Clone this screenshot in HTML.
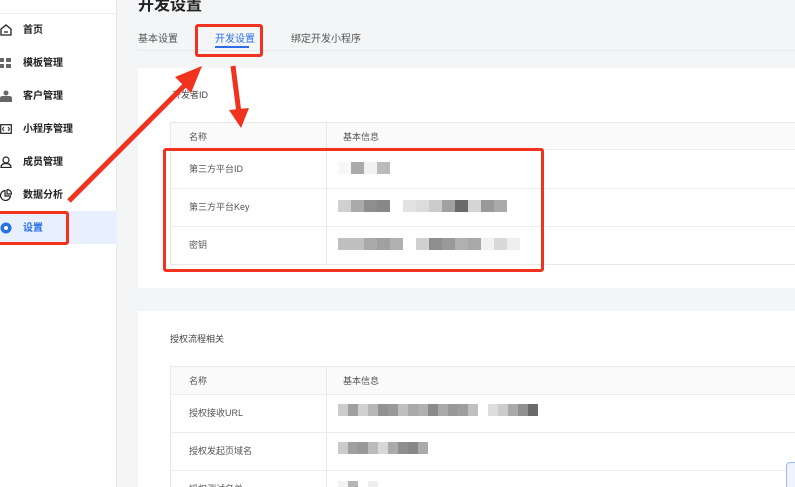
<!DOCTYPE html><html style="width:795px;height:487px;overflow:hidden"><head><meta charset="utf-8"><style>
*{margin:0;padding:0;box-sizing:border-box}
body{width:795px;height:487px;overflow:hidden;background:#f4f5f6;font-family:"Liberation Sans","Noto Sans CJK SC",sans-serif;position:relative;color:#333}
.abs{position:absolute}
.side{left:0;top:0;width:117px;height:487px;background:#fff;border-right:1px solid #e8e8e8}
.si{position:absolute;left:0;width:117px;height:33px;font-size:10px;font-weight:bold;color:#222;line-height:33px;padding-left:23px}
.ic{position:absolute;left:0;top:10px;width:12px;height:12px}
.tab{font-size:10px;color:#555;top:30px}
.card{background:#fff;left:138px;width:657px}
.tbl{position:absolute;left:170px;width:630px;border:1px solid #e8e8e8;font-size:9px;color:#555}
.tr{position:relative;border-top:1px solid #ececec}
.tr:first-child{border-top:none}
.c1{position:absolute;left:18px}
.vl{position:absolute;left:155px;top:0;bottom:0;border-left:1px solid #e8e8e8}
.px{position:absolute;height:12px;display:flex}
.px i{display:block;width:13px;height:12px}
.red{border:3px solid #f0321e;border-radius:3px}
</style></head><body>
<div class="abs side"></div>
<div class="abs" style="left:0;top:13px;width:117px;border-top:1px solid #eee"></div>
<div class="abs" style="left:0;top:211px;width:117px;height:33px;background:#e8f0fd"></div>
<div class="si" style="top:14px"><svg class="ic" viewBox="0 0 12 12"><path d="M1 5L6 1L11 5V11H1Z M4 8H8" fill="none" stroke="#222" stroke-width="1.3"/></svg>首页</div>
<div class="si" style="top:47px"><svg class="ic" viewBox="0 0 12 12" fill="#666"><rect x="0" y="1" width="4" height="4"/><rect x="6" y="1" width="5" height="4"/><rect x="0" y="7" width="4" height="4"/><rect x="6" y="7" width="5" height="4"/></svg>模板管理</div>
<div class="si" style="top:80px"><svg class="ic" viewBox="0 0 12 12" fill="#666"><circle cx="6" cy="3" r="2.5"/><path d="M0 12V8Q0 6 3 6H9Q12 6 12 8V12Z"/></svg>客户管理</div>
<div class="si" style="top:113px"><svg class="ic" viewBox="0 0 12 12"><rect x="0.7" y="1.7" width="10.6" height="8.6" fill="none" stroke="#222" stroke-width="1.2"/><path d="M4 4L2.5 6L4 8M8 4L9.5 6L8 8" fill="none" stroke="#222"/></svg>小程序管理</div>
<div class="si" style="top:146px"><svg class="ic" viewBox="0 0 12 12"><circle cx="6" cy="4" r="3" fill="none" stroke="#222" stroke-width="1.2"/><path d="M1 11.5Q1 7.5 6 7.5Q11 7.5 11 11.5Z" fill="none" stroke="#222" stroke-width="1.2"/></svg>成员管理</div>
<div class="si" style="top:179px"><svg class="ic" viewBox="0 0 12 12"><path d="M5 1.5A5 5 0 1 0 10.5 7H5Z M7 0.5V5H11.5A4.5 4.5 0 0 0 7 0.5" fill="none" stroke="#222" stroke-width="1.2"/></svg>数据分析</div>
<div class="si" style="top:212px;color:#2b6fe8"><svg class="ic" viewBox="0 0 12 12"><circle cx="6" cy="6" r="5.5" fill="#2b6fe8"/><circle cx="6" cy="6" r="2" fill="#fff"/></svg>设置</div>

<div class="abs" style="left:138px;top:-9px;font-size:16px;font-weight:bold;color:#222">开发设置</div>
<div class="abs tab" style="left:138px">基本设置</div>
<div class="abs tab" style="left:215px;color:#2b6fe8">开发设置</div>
<div class="abs" style="left:215px;top:46px;width:34px;height:2px;background:#2b6fe8"></div>
<div class="abs tab" style="left:291px">绑定开发小程序</div>
<div class="abs" style="left:138px;top:50px;width:657px;border-top:1px solid #eaeaea"></div>

<div class="abs card" style="top:68px;height:220px"></div>
<div class="abs" style="left:172px;top:88px;font-size:9px;color:#444">开发者ID</div>
<div class="tbl" style="top:122px">
<div class="tr" style="height:26px;background:#fafafa"><span class="c1" style="top:7px">名称</span><span class="vl"></span><span style="position:absolute;left:172px;top:7px">基本信息</span></div>
<div class="tr" style="height:39px"><span class="c1" style="top:12px">第三方平台ID</span><span class="vl"></span></div>
<div class="tr" style="height:38px"><span class="c1" style="top:11px">第三方平台Key</span><span class="vl"></span></div>
<div class="tr" style="height:38px"><span class="c1" style="top:11px">密钥</span><span class="vl"></span></div>
</div>
<div class="px" style="left:338px;top:162px"><i style="background:#f7f7f7"></i><i style="background:#aaa"></i><i style="background:#f2f2f2"></i><i style="background:#bbb"></i></div>
<div class="px" style="left:338px;top:200px"><i style="background:#d0d0d0"></i><i style="background:#aaa"></i><i style="background:#8e8e8e"></i><i style="background:#888"></i><i style="background:#fff"></i><i style="background:#e2e2e2"></i><i style="background:#dcdcdc"></i><i style="background:#ccc"></i><i style="background:#a0a0a0"></i><i style="background:#6a6a6a"></i><i style="background:#d5d5d5"></i><i style="background:#999"></i><i style="background:#aaa"></i></div>
<div class="px" style="left:338px;top:238px"><i style="background:#c0c0c0"></i><i style="background:#c0c0c0"></i><i style="background:#aaa"></i><i style="background:#a0a0a0"></i><i style="background:#b0b0b0"></i><i style="background:#fff"></i><i style="background:#d0d0d0"></i><i style="background:#8e8e8e"></i><i style="background:#999"></i><i style="background:#b0b0b0"></i><i style="background:#a8a8a8"></i><i style="background:#f2f2f2"></i><i style="background:#d8d8d8"></i><i style="background:#eee"></i></div>

<div class="abs card" style="top:311px;height:176px"></div>
<div class="abs" style="left:170px;top:332px;font-size:9px;color:#444">授权流程相关</div>
<div class="tbl" style="top:366px">
<div class="tr" style="height:27px;background:#fafafa"><span class="c1" style="top:7px">名称</span><span class="vl"></span><span style="position:absolute;left:172px;top:7px">基本信息</span></div>
<div class="tr" style="height:38px"><span class="c1" style="top:11px">授权接收URL</span><span class="vl"></span></div>
<div class="tr" style="height:38px"><span class="c1" style="top:11px">授权发起页域名</span><span class="vl"></span></div>
<div class="tr" style="height:38px"><span class="c1" style="top:11px">授权测试名单</span><span class="vl"></span></div>
</div>
<div class="px" style="left:338px;top:404px"><i style="background:#ccc;width:10px"></i><i style="background:#a0a0a0;width:10px"></i><i style="background:#d0d0d0;width:10px"></i><i style="background:#b8b8b8;width:10px"></i><i style="background:#929292;width:10px"></i><i style="background:#999;width:10px"></i><i style="background:#c0c0c0;width:10px"></i><i style="background:#aaa;width:10px"></i><i style="background:#b0b0b0;width:10px"></i><i style="background:#8a8a8a;width:10px"></i><i style="background:#aaa;width:10px"></i><i style="background:#999;width:10px"></i><i style="background:#9e9e9e;width:10px"></i><i style="background:#c0c0c0;width:10px"></i><i style="background:#fff;width:10px"></i><i style="background:#ddd;width:10px"></i><i style="background:#ccc;width:10px"></i><i style="background:#aaa;width:10px"></i><i style="background:#909090;width:10px"></i><i style="background:#6a6a6a;width:10px"></i></div>
<div class="px" style="left:338px;top:442px"><i style="background:#ccc;width:10px"></i><i style="background:#a0a0a0;width:10px"></i><i style="background:#999;width:10px"></i><i style="background:#bbb;width:10px"></i><i style="background:#d8d8d8;width:10px"></i><i style="background:#aaa;width:10px"></i><i style="background:#8e8e8e;width:10px"></i><i style="background:#888;width:10px"></i><i style="background:#aaa;width:10px"></i></div>
<div class="px" style="left:338px;top:481px"><i style="background:#f2f2f2;width:10px"></i><i style="background:#b5b5b5;width:10px"></i><i style="background:#fff;width:10px"></i><i style="background:#eee;width:10px"></i></div>
<div class="abs" style="left:786px;top:462px;width:20px;height:30px;border:1px solid #9bbcf5;border-radius:4px;background:#eef4fe"></div>

<div class="abs red" style="left:195px;top:24px;width:68px;height:33px"></div>
<div class="abs red" style="left:-3px;top:211px;width:72px;height:34px"></div>
<div class="abs red" style="left:163px;top:148px;width:381px;height:124px"></div>
<svg class="abs" style="left:0;top:0" width="795" height="487">
<path d="M69 201L188 82" stroke="#f0321e" stroke-width="5"/>
<path d="M202 66L175 77L191 93Z" fill="#f0321e"/>
<path d="M233 66L239 113" stroke="#f0321e" stroke-width="5"/>
<path d="M229 110L249 108L241 128Z" fill="#f0321e"/>
</svg>
</body></html>
